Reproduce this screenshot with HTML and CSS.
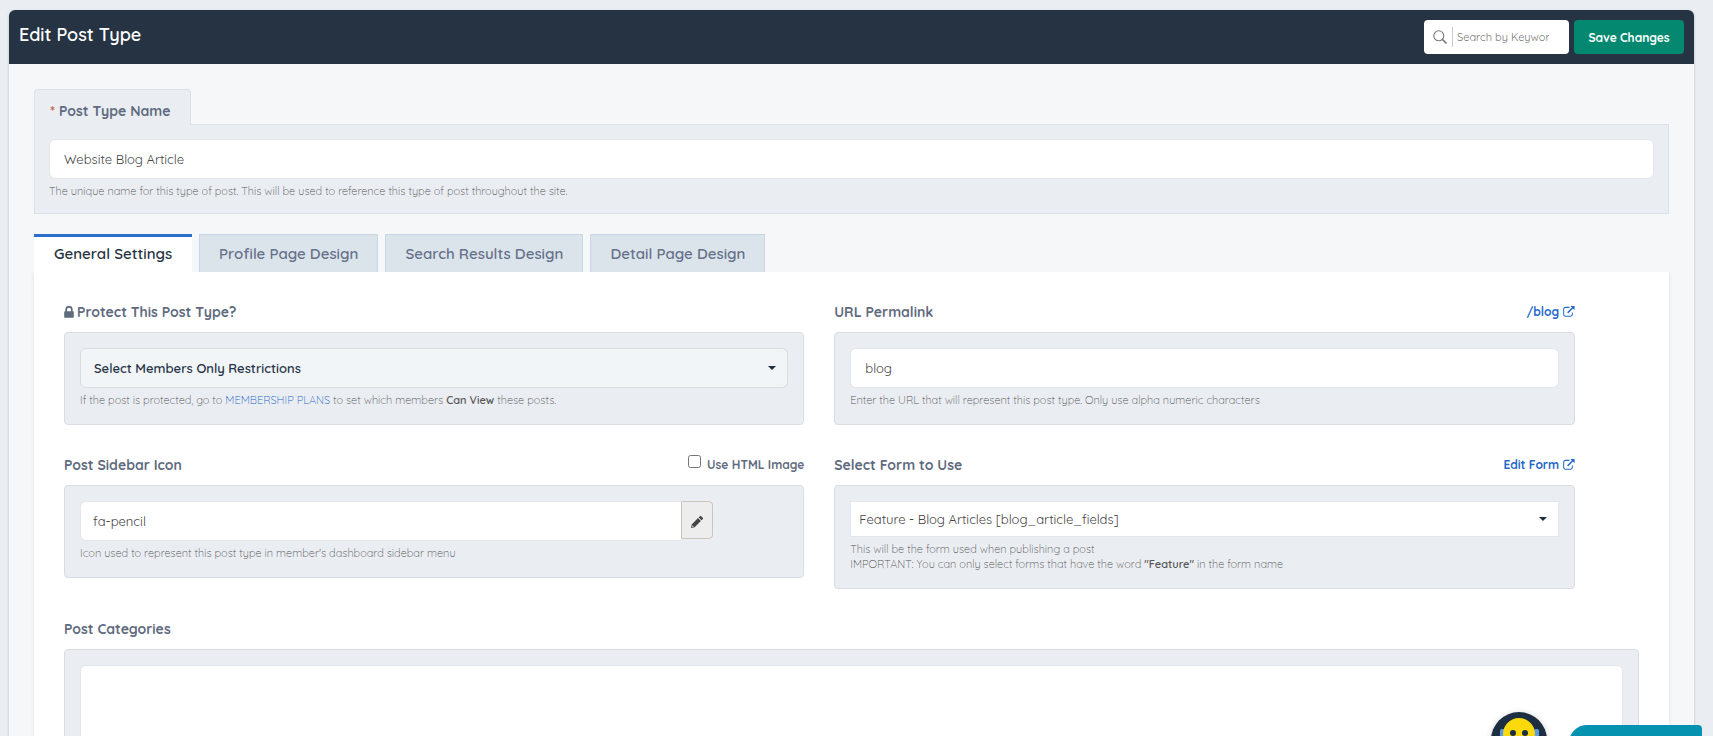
FILE: index.html
```html
<!DOCTYPE html>
<html lang="en">
<head>
    <meta charset="UTF-8">
    <meta name="viewport" content="width=device-width, initial-scale=1.0">
    <title>Edit Post Type</title>
    <link rel="stylesheet" href="styles.css">
</head>
<body>

<form class="panel">
    <header class="panel-header">
        <h1>Edit Post Type</h1>
        <div class="header-actions">
            <label class="search">
                <svg class="search-icon" viewBox="0 0 14 14" aria-hidden="true">
                    <circle cx="5.8" cy="5.8" r="5" fill="none" stroke="#777" stroke-width="1.1"/>
                    <path d="M9.5 9.5L13 13" stroke="#777" stroke-width="1.7" stroke-linecap="round"/>
                </svg>
                <input type="text" placeholder="Search by Keyword" aria-label="Search by Keyword">
            </label>
            <button type="submit" class="btn-save">Save Changes</button>
        </div>
    </header>

    <div class="panel-body">
        <section class="name-block">
            <label class="name-tab" for="post-name"><span class="required">*</span> Post Type Name</label>
            <div class="name-box">
                <input type="text" class="field" id="post-name" value="Website Blog Article">
                <p class="help">The unique name for this type of post. This will be used to reference this type of post throughout the site.</p>
            </div>
        </section>

        <nav class="tabs">
            <a href="#general" class="tab active">General Settings</a>
            <a href="#profile" class="tab">Profile Page Design</a>
            <a href="#search" class="tab">Search Results Design</a>
            <a href="#detail" class="tab">Detail Page Design</a>
        </nav>

        <div class="tab-pane" id="general">
            <div class="settings">
                <div class="setting">
                    <div class="setting-head">
                        <label class="setting-label" for="protect">
                            <svg class="lock-icon" viewBox="0 0 10 12" aria-hidden="true">
                                <path d="M2.2 6V3.6a2.8 2.8 0 0 1 5.6 0V6" fill="none" stroke="currentColor" stroke-width="1.7"/>
                                <rect x="0.2" y="5.2" width="9.6" height="6.6" rx="0.8" fill="currentColor"/>
                            </svg>Protect This Post Type?
                        </label>
                    </div>
                    <div class="well">
                        <div class="select-wrap">
                            <select class="field field-restrict" id="protect">
                                <option>Select Members Only Restrictions</option>
                            </select>
                        </div>
                        <p class="help">If the post is protected, go to <a href="#plans">MEMBERSHIP PLANS</a> to set which members <b>Can View</b> these posts.</p>
                    </div>
                </div>

                <div class="setting">
                    <div class="setting-head">
                        <label class="setting-label" for="permalink">URL Permalink</label>
                        <a class="head-link" href="#blog">/blog
                            <svg class="link-icon" viewBox="0 0 13 12" aria-hidden="true">
                                <path d="M7 1.5H2.5A1.8 1.8 0 0 0 .7 3.3v6A1.8 1.8 0 0 0 2.5 11.1h5.8a1.8 1.8 0 0 0 1.8-1.8V7" fill="none" stroke="currentColor" stroke-width="1.1"/>
                                <path d="M5 7.5L10.8 1.7" stroke="currentColor" stroke-width="1.6"/>
                                <path d="M8 0h4.6v4.6z" fill="currentColor"/>
                            </svg>
                        </a>
                    </div>
                    <div class="well">
                        <input type="text" class="field" id="permalink" value="blog">
                        <p class="help">Enter the URL that will represent this post type. Only use alpha numeric characters</p>
                    </div>
                </div>

                <div class="setting">
                    <div class="setting-head">
                        <label class="setting-label" for="sidebar-icon">Post Sidebar Icon</label>
                        <label class="head-check"><input type="checkbox"> Use HTML Image</label>
                    </div>
                    <div class="well">
                        <div class="icon-picker">
                            <input type="text" class="field" id="sidebar-icon" value="fa-pencil">
                            <button type="button" class="btn-icon" aria-label="Pick icon">
                                <svg viewBox="0 0 12 12" aria-hidden="true">
                                    <path d="M0 12l.7-3.6L7 2.1 9.900 5 3.600 11.300zM7.700 1.400L8.800.3a1 1 0 0 1 1.400 0l1.500 1.500a1 1 0 0 1 0 1.400l-1.100 1.100z" fill="#444"/>
                                    <path d="M1.300 9.200l1.500 1.500-1.500.3z" fill="#fff"/>
                                </svg>
                            </button>
                        </div>
                        <p class="help">Icon used to represent this post type in member's dashboard sidebar menu</p>
                    </div>
                </div>

                <div class="setting">
                    <div class="setting-head">
                        <label class="setting-label" for="form-name">Select Form to Use</label>
                        <a class="head-link" href="#form">Edit Form
                            <svg class="link-icon" viewBox="0 0 13 12" aria-hidden="true">
                                <path d="M7 1.5H2.5A1.8 1.8 0 0 0 .7 3.3v6A1.8 1.8 0 0 0 2.5 11.1h5.8a1.8 1.8 0 0 0 1.8-1.8V7" fill="none" stroke="currentColor" stroke-width="1.1"/>
                                <path d="M5 7.5L10.8 1.7" stroke="currentColor" stroke-width="1.6"/>
                                <path d="M8 0h4.6v4.6z" fill="currentColor"/>
                            </svg>
                        </a>
                    </div>
                    <div class="well">
                        <div class="select-wrap">
                            <select class="field field-form" id="form-name">
                                <option>Feature - Blog Articles [blog_article_fields]</option>
                            </select>
                        </div>
                        <p class="help">This will be the form used when publishing a post<br>IMPORTANT: You can only select forms that have the word <b>"Feature"</b> in the form name</p>
                    </div>
                </div>
            </div>

            <div class="setting">
                <div class="setting-head">
                    <label class="setting-label" for="categories">Post Categories</label>
                </div>
                <div class="well">
                    <textarea class="field field-area" id="categories"></textarea>
                </div>
            </div>
        </div>
    </div>
</form>

<button type="button" class="helper-bot" aria-label="Help">
    <svg viewBox="0 0 56 56" aria-hidden="true">
        <circle cx="28" cy="28" r="28" fill="#1d2d42"/>
        <rect x="9" y="17" width="5" height="16" rx="2" fill="#5b9be6"/>
        <rect x="43" y="17" width="5" height="16" rx="2" fill="#5b9be6"/>
        <circle cx="28" cy="22" r="16" fill="#fcd90d"/>
        <circle cx="22" cy="21" r="3" fill="#1d2d42"/>
        <circle cx="34" cy="21" r="3" fill="#1d2d42"/>
    </svg>
</button>
<button type="button" class="chat-tab" aria-label="Chat"></button>

</body>
</html>
```
FILE: styles.css
```css
* {
    box-sizing: border-box;
}

html {
    height: 100%;
    overflow: hidden;
}

body {
    font-family: Quicksand, 'Open Sans', sans-serif;
    font-size: 14px;
    color: #5f6b7e;
    background-color: #eaedf2;
    margin: 0;
    padding: 10px 19px 0 9px;
    height: 100%;
    overflow: hidden;
}

input, select, button, textarea {
    font-family: inherit;
}

a {
    color: #2468c8;
    text-decoration: none;
}

.panel {
    background-color: #f5f7f9;
    border-radius: 6px 6px 0 0;
    box-shadow: 0 1px 3px rgba(0, 0, 0, 0.2);
}

.panel-header {
    display: flex;
    justify-content: space-between;
    background-color: #263343;
    border-radius: 6px 6px 0 0;
    padding: 10px;
}

.panel-header h1 {
    color: #fff;
    font-size: 18px;
    font-weight: 600;
    line-height: 30px;
    margin: 0;
}

.header-actions {
    display: flex;
    gap: 5px;
    height: 34px;
}

.search {
    display: flex;
    align-items: center;
    width: 145px;
    background-color: #fff;
    border-radius: 4px;
    padding: 0 20px 0 9px;
}

.search-icon {
    flex: none;
    width: 14px;
    height: 14px;
    margin-right: 5px;
}

.search input {
    flex: 1;
    min-width: 0;
    height: 20px;
    border: none;
    border-left: 1px solid #ccc;
    padding: 0 0 0 4px;
    font-size: 11px;
    background: none;
}

.search input::placeholder {
    color: #777;
}

.btn-save {
    width: 110px;
    background-color: #048970;
    color: #fff;
    border: none;
    border-radius: 4px;
    padding: 0;
    font-size: 12px;
    font-weight: 700;
}

.panel-body {
    padding: 25px 25px 0;
}

.name-block {
    display: flex;
    flex-direction: column;
    align-items: flex-start;
    margin-bottom: 20px;
}

.name-tab {
    position: relative;
    z-index: 1;
    background-color: #eaedf2;
    border: 1px solid #dae2ea;
    border-bottom: none;
    border-radius: 4px 4px 0 0;
    padding: 0 19px 0 15px;
    height: 36px;
    line-height: 42px;
    margin-bottom: -1px;
    font-weight: 700;
}

.required {
    color: #b5654a;
}

.name-box {
    width: 100%;
    background-color: #eaedf2;
    border: 1px solid #dae2ea;
    padding: 14px;
}

.field {
    display: block;
    width: 100%;
    height: 40px;
    background-color: #fff;
    color: #444;
    border: 1px solid #e3e6ea;
    border-radius: 6px;
    padding: 0 14px;
    font-size: 13px;
}

.help {
    color: #555;
    font-size: 11px;
    font-weight: 300;
    line-height: 15px;
    margin: 5px 0 0;
}

.help a {
    color: #2468c8;
}

.help b {
    color: #555;
    font-weight: 600;
}

.tabs {
    display: flex;
    gap: 7px;
}

.tab {
    background-color: #dce4eb;
    color: #66718a;
    border: 1px solid #c9d6e5;
    border-bottom: none;
    padding: 0 19px;
    height: 38px;
    line-height: 38px;
    font-size: 15px;
    font-weight: 600;
}

.tab.active {
    background-color: #fff;
    color: #263343;
    border: none;
    border-top: 3px solid #2a6ed0;
    padding: 0 20px;
    line-height: 34px;
}

.tab-pane {
    background-color: #fff;
    padding: 30px 30px 40px;
    box-shadow: 0 0 4px rgba(0, 0, 0, 0.1);
    clip-path: inset(0 -4px);
}

.settings {
    display: grid;
    grid-template-columns: 47% 47%;
    gap: 30px;
    margin-bottom: 30px;
}

.setting-head {
    display: flex;
    justify-content: space-between;
    height: 30px;
    line-height: 21px;
}

.setting-label {
    font-weight: 700;
}

.lock-icon {
    width: 10px;
    height: 12px;
    margin-right: 3px;
    vertical-align: -1px;
}

.head-link {
    font-size: 12px;
    font-weight: 700;
    line-height: 19px;
}

.link-icon {
    width: 12px;
    height: 11px;
    vertical-align: -1px;
}

.head-check {
    display: flex;
    align-items: flex-start;
    gap: 6px;
    font-size: 12px;
    font-weight: 700;
    line-height: 19px;
}

.head-check input {
    width: 13px;
    height: 13px;
    margin: 0;
}

.well {
    background-color: #eaedf2;
    border: 1px solid #d9dde2;
    border-radius: 4px;
    padding: 15px 15px 16px;
}

.select-wrap {
    position: relative;
}

.select-wrap::after {
    content: '';
    position: absolute;
    top: 50%;
    right: 12px;
    margin-top: -2px;
    border: 4px solid transparent;
    border-top-color: #1f2d3d;
    border-bottom: none;
    pointer-events: none;
}

.select-wrap select {
    appearance: none;
}

.field-restrict {
    background-color: #f1f5f8;
    color: #263343;
    border-color: #d9dcdf;
    padding: 0 13px;
    font-weight: 600;
}

.field-form {
    height: 36px;
    border-radius: 0;
    padding: 0 8px;
}

.icon-picker {
    display: flex;
    align-items: flex-start;
    width: 633px;
    max-width: 100%;
}

.icon-picker .field {
    flex: 1;
    border-right: none;
    border-radius: 6px 0 0 6px;
    padding: 0 12px;
}

.btn-icon {
    width: 32px;
    height: 38px;
    background-color: #ededed;
    border: 1px solid #ccc5bc;
    border-radius: 0 4px 4px 0;
    padding: 0;
}

.btn-icon svg {
    width: 12px;
    height: 12px;
    vertical-align: middle;
}

.field-area {
    height: 200px;
    resize: none;
}

.helper-bot {
    position: fixed;
    right: 166px;
    bottom: -32px;
    width: 56px;
    height: 56px;
    background: none;
    border: none;
    border-radius: 50%;
    padding: 0;
    box-shadow: 0 1px 6px rgba(0, 0, 0, 0.2);
}

.helper-bot svg {
    display: block;
}

.chat-tab {
    position: fixed;
    right: 11px;
    bottom: -29px;
    width: 133px;
    height: 40px;
    background-color: #0492b0;
    border: none;
    border-radius: 18px 4px 0 0;
}
```
